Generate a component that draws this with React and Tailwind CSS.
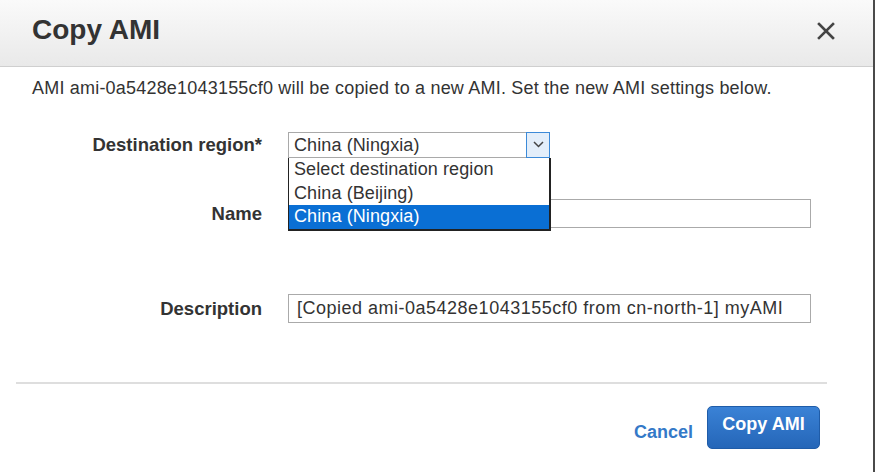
export default function App() {
  return (
    <div className="w-[877px] h-[472px] bg-white overflow-hidden" style={{ fontFamily: '"Liberation Sans", Arial, sans-serif' }}>
      <div className="w-[875px] h-full border-r-2 border-[#4a4a4a] flex flex-col">
        {/* Header */}
        <div className="h-[67px] shrink-0 bg-gradient-to-b from-[#fafafa] to-[#e9e9e9] border-b border-[#cfcfcf] flex items-center justify-between pl-[32px] pr-[38px]">
          <h1 className="text-[28px] font-bold text-[#333] pb-[6px]">Copy AMI</h1>
          <svg width="18" height="18" viewBox="0 0 18 18" className="mb-[4px]">
            <path d="M2 2 L16 16 M16 2 L2 16" stroke="#444" strokeWidth="2.6" strokeLinecap="square" />
          </svg>
        </div>

        {/* Body */}
        <div className="px-[32px] pt-[10px]">
          <p className="text-[18px] leading-[22px] text-[#333] tracking-[0.2px]">
            AMI ami-0a5428e1043155cf0 will be copied to a new AMI. Set the new AMI settings below.
          </p>
        </div>

        <div className="mt-[33px] grid grid-cols-[262px_1fr] gap-x-[26px] pr-[62px] text-[18px] text-[#333]">
          {/* Destination region */}
          <div className="h-[26px] flex items-center justify-end font-bold text-[18.5px]">Destination region*</div>
          <div className="relative h-[26px]">
            <div className="w-[262px] h-[26px] border border-[#a9a9a9] bg-white flex items-center">
              <span className="pl-[5px] flex-1 tracking-[0.1px]">China (Ningxia)</span>
              <div className="w-[24px] h-[26px] -mt-px -mr-px border border-[#3c8ad8] bg-[#e3eefa] flex items-center justify-center">
                <svg width="11" height="7" viewBox="0 0 11 7">
                  <path d="M1 1 L5.5 5.5 L10 1" stroke="#444" strokeWidth="1.5" fill="none" />
                </svg>
              </div>
            </div>
            <div className="absolute z-10 left-0 top-[26px] w-[263px] border-r-2 border-b-2 border-l border-[#222] bg-white leading-[23.5px] tracking-[0.1px]">
              <div className="pl-[5px]">Select destination region</div>
              <div className="pl-[5px]">China (Beijing)</div>
              <div className="pl-[5px] bg-[#0a6fd4] text-white">China (Ningxia)</div>
            </div>
          </div>

          {/* Name */}
          <div className="mt-[41px] h-[29px] flex items-center justify-end font-bold text-[18.5px]">Name</div>
          <div className="mt-[41px] h-[29px] border border-[#aaa] bg-white"></div>

          {/* Description */}
          <div className="mt-[66px] h-[29px] flex items-center justify-end font-bold text-[18.5px]">Description</div>
          <div className="mt-[66px] h-[29px] border border-[#aaa] bg-white flex items-center pl-[8px] tracking-[0.5px]">
            [Copied ami-0a5428e1043155cf0 from cn-north-1] myAMI
          </div>
        </div>

        {/* Divider */}
        <div className="ml-[16px] mr-[46px] mt-[59px] h-[2px] bg-[#dedede]"></div>

        {/* Footer */}
        <div className="flex items-center justify-end gap-[14px] pr-[53px] mt-[22px]">
          <span className="text-[18px] font-bold text-[#3479c8] mt-[10px]">Cancel</span>
          <button className="w-[113px] h-[43px] rounded-[5px] bg-gradient-to-b from-[#3a82d6] to-[#2566b8] border border-[#1f5ca8] text-white text-[18px] font-bold pb-[6px]">
            Copy AMI
          </button>
        </div>
      </div>
    </div>
  );
}
